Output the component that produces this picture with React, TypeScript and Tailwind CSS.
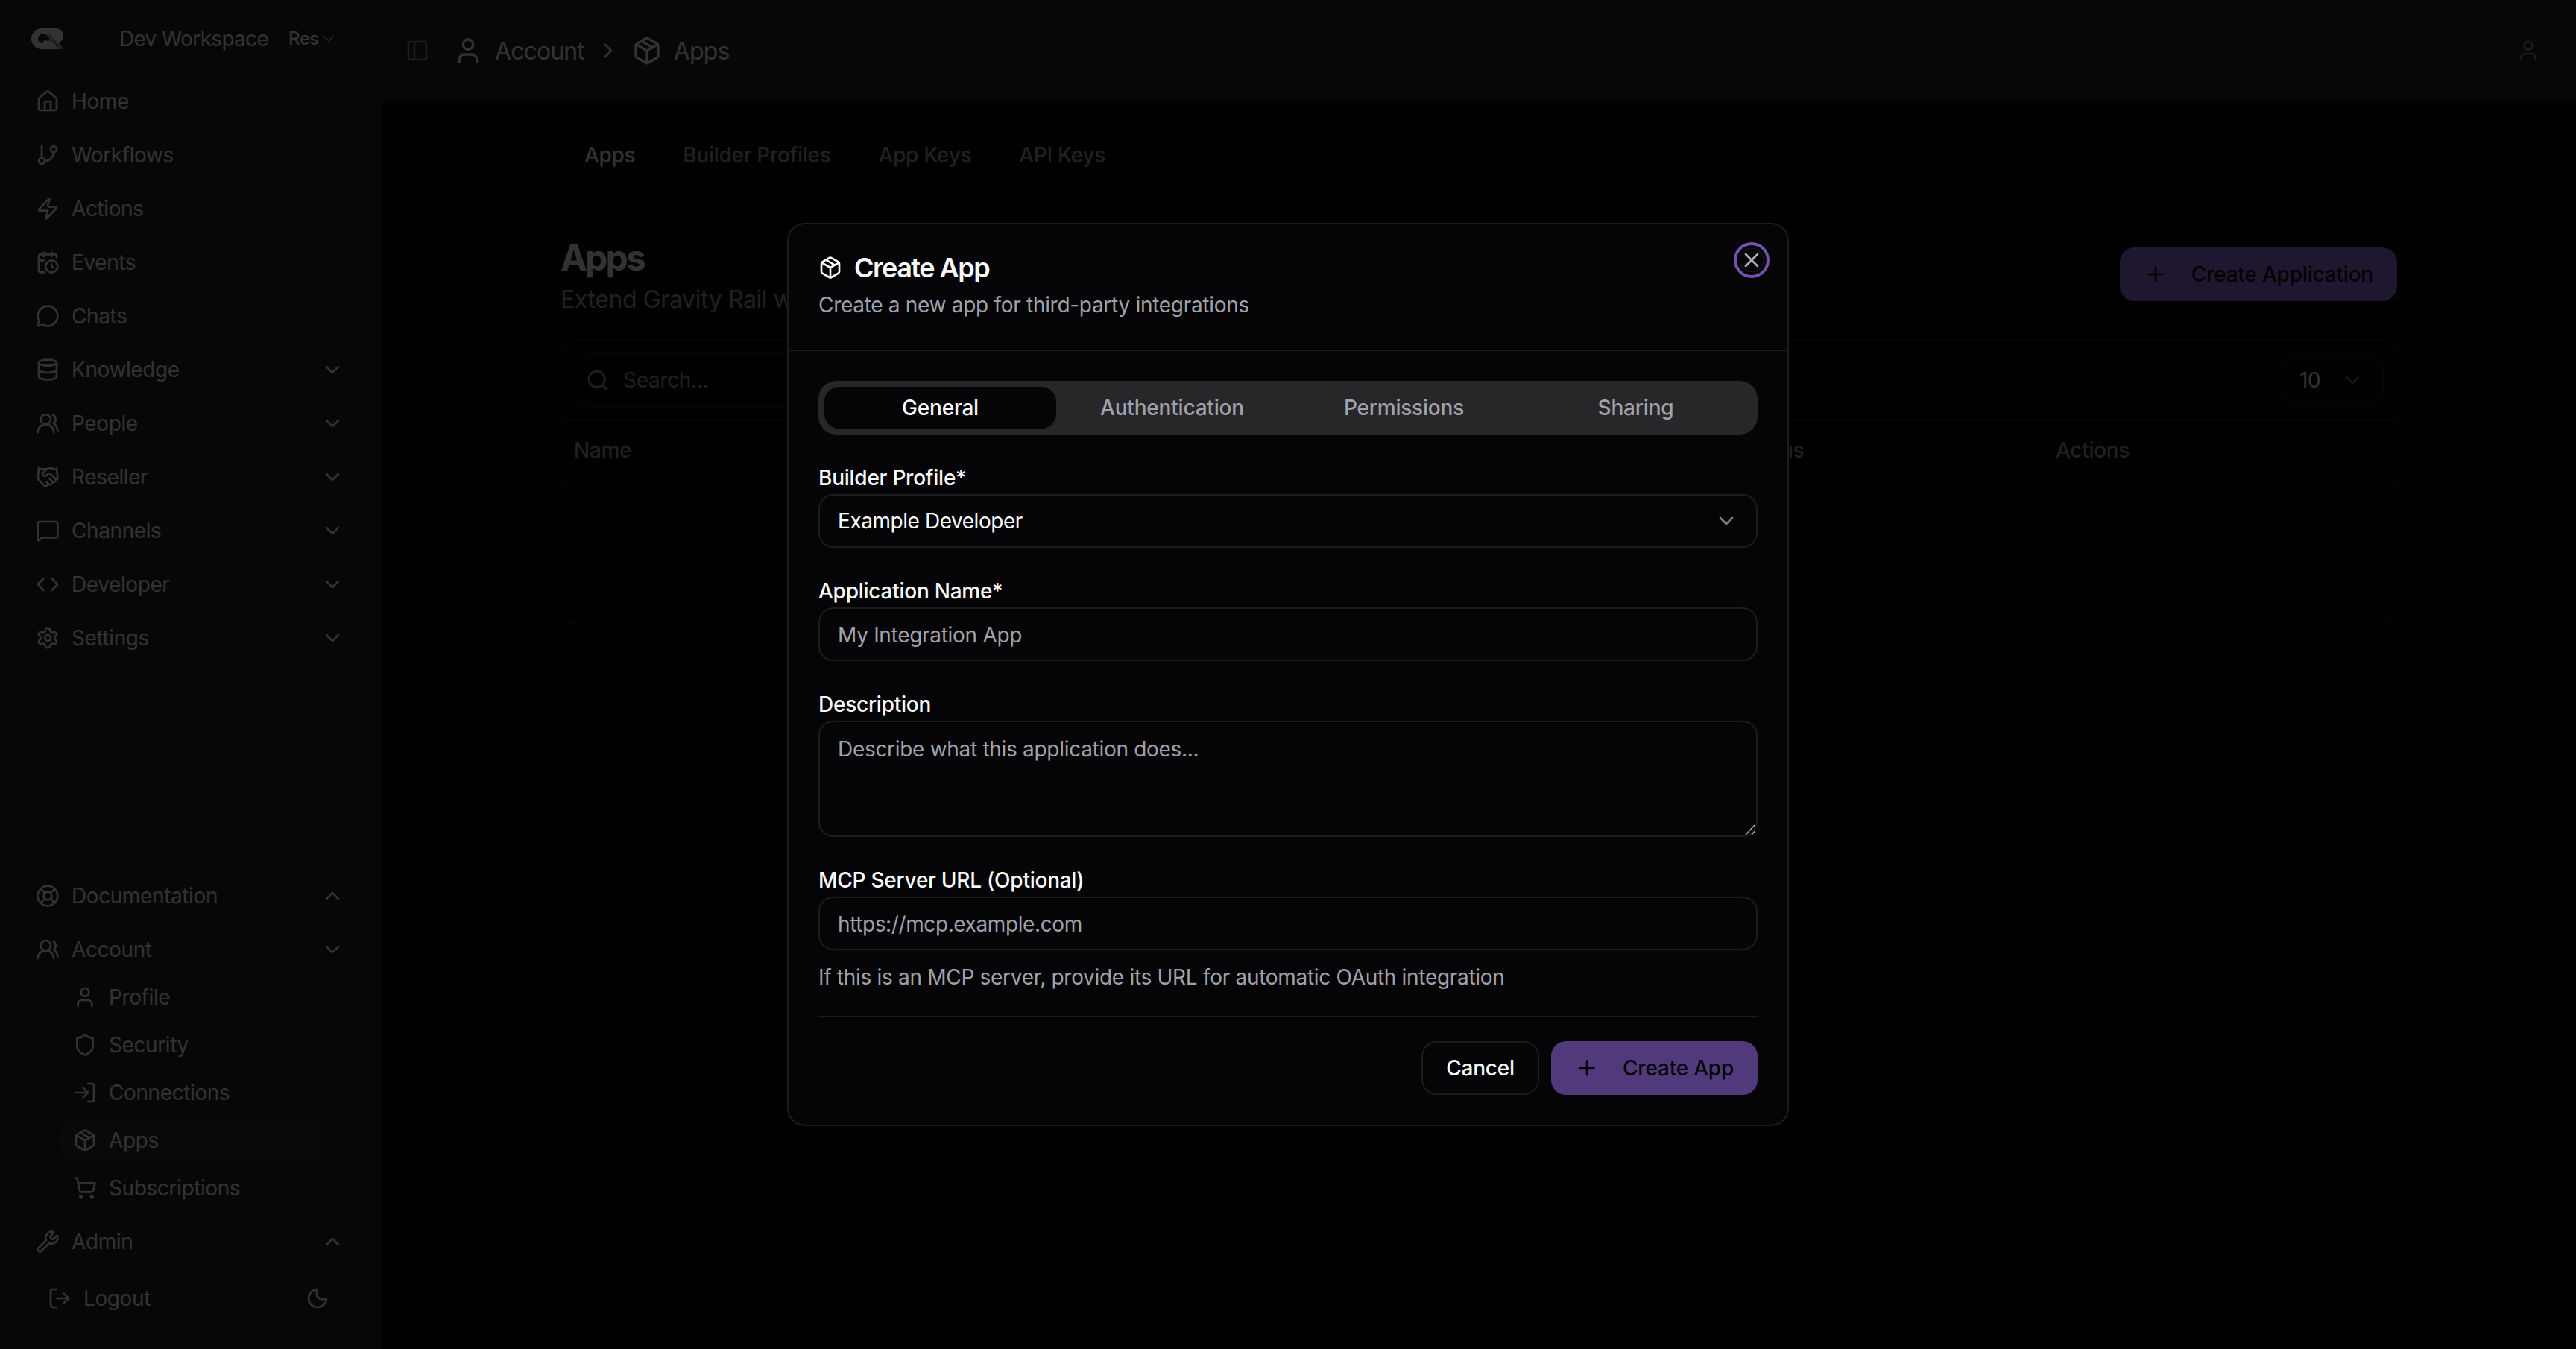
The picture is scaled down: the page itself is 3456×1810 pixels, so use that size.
import type { ReactNode } from "react";
import {
  CalendarClock,
  ChevronDown,
  ChevronRight,
  ChevronUp,
  Code,
  Database,
  GitBranch,
  Handshake,
  House,
  LifeBuoy,
  LogIn,
  LogOut,
  MessageCircle,
  MessageSquare,
  Moon,
  Package,
  PanelLeft,
  Plus,
  Search,
  Settings,
  Shield,
  ShoppingCart,
  User,
  UsersRound,
  Wrench,
  X,
  Zap,
  type LucideIcon,
} from "lucide-react";

type NavItem = {
  label: string;
  icon: LucideIcon;
  chevron?: "up" | "down";
};

const mainNav: NavItem[] = [
  { label: "Home", icon: House },
  { label: "Workflows", icon: GitBranch },
  { label: "Actions", icon: Zap },
  { label: "Events", icon: CalendarClock },
  { label: "Chats", icon: MessageCircle },
  { label: "Knowledge", icon: Database, chevron: "down" },
  { label: "People", icon: UsersRound, chevron: "down" },
  { label: "Reseller", icon: Handshake, chevron: "down" },
  { label: "Channels", icon: MessageSquare, chevron: "down" },
  { label: "Developer", icon: Code, chevron: "down" },
  { label: "Settings", icon: Settings, chevron: "down" },
];

const accountNav: NavItem[] = [
  { label: "Profile", icon: User },
  { label: "Security", icon: Shield },
  { label: "Connections", icon: LogIn },
  { label: "Apps", icon: Package },
  { label: "Subscriptions", icon: ShoppingCart },
];

const pageTabs = ["Apps", "Builder Profiles", "App Keys", "API Keys"];
const dialogTabs = ["General", "Authentication", "Permissions", "Sharing"];

function Logo() {
  return (
    <svg viewBox="0 0 43 28" className="h-7 w-[43px]" fill="none">
      <path
        fill="currentColor"
        fillRule="evenodd"
        d="M14 0H33.5a9.5 9.5 0 0 1 9.5 9.5c0 4.500-2.500 8.300-6 10.300L43 28H14A14 14 0 0 1 14 0ZM15.500 7.500C11.800 7.500 9 10.500 9 14s2.800 6 7.200 6.200V16.500H26.500L18.500 7.500Z"
      />
      <path
        className="stroke-[#27272a]"
        strokeWidth="0.9"
        d="M18.500 7.500 37 28M21 7.500 39.300 28M23.500 7.500 41.600 28"
      />
    </svg>
  );
}

function NavRow({ item }: { item: NavItem }) {
  const Icon = item.icon;
  return (
    <a className="flex h-16 items-center gap-4 px-4">
      <Icon className="size-8" />
      <span className="flex-1">{item.label}</span>
      {item.chevron === "down" && <ChevronDown className="size-8" />}
      {item.chevron === "up" && <ChevronUp className="size-8" />}
    </a>
  );
}

function Sidebar() {
  return (
    <aside className="flex w-[512px] shrink-0 flex-col border-r-2 border-[#1c1c1f] bg-[#27272a] pb-8 pl-8 pr-8 pt-4 tracking-[-0.4px]">
      <div className="flex h-[72px] items-center justify-between pl-2.5">
        <Logo />
        <button className="flex h-[72px] w-[360px] items-center rounded-[20px] border-2 border-[#1c1c1f] pl-10 pr-[26px]">
          <span className="whitespace-nowrap tracking-[-0.7px]">Dev Workspace</span>
          <span className="ml-[17px] flex h-11 w-[52px] shrink-0 items-center overflow-hidden rounded-l-[20px] border-y-2 border-l-2 border-[#1c1c1f] pl-2 text-[24px] font-medium tracking-[-0.5px]">
            Res
          </span>
          <ChevronDown className="size-6 shrink-0 opacity-50" />
        </button>
      </div>

      <nav className="flex flex-col gap-2 pt-4">
        {mainNav.map((item) => (
          <NavRow key={item.label} item={item} />
        ))}
      </nav>

      <div className="mt-auto flex flex-col gap-2">
        <NavRow item={{ label: "Documentation", icon: LifeBuoy, chevron: "up" }} />
        <div>
          <NavRow item={{ label: "Account", icon: UsersRound, chevron: "down" }} />
          <ul className="ml-[30px] flex w-[368px] flex-col gap-2 border-l-2 border-[#1c1c1f] py-1 pl-[18px]">
            {accountNav.map(({ label, icon: Icon }) => (
              <li
                key={label}
                className={`flex h-14 items-center gap-4 rounded-[20px] px-4 ${
                  label === "Apps" ? "bg-[#313134]" : ""
                }`}
              >
                <Icon className="size-8" />
                {label}
              </li>
            ))}
          </ul>
        </div>
        <NavRow item={{ label: "Admin", icon: Wrench, chevron: "up" }} />
      </div>

      <div className="flex h-20 items-end justify-between pl-8 pr-4">
        <button className="flex h-[72px] items-center gap-4">
          <LogOut className="size-8" />
          Logout
        </button>
        <button className="grid size-[72px] place-items-center rounded-[20px] border-2 border-[#1c1c1f]">
          <Moon className="size-8" />
        </button>
      </div>
    </aside>
  );
}

function Header() {
  return (
    <header className="flex h-[138px] items-center border-b-2 border-[#1c1c1f] bg-[#27272a] pl-8 pr-12">
      <PanelLeft className="size-8 text-[#8c8c92]" />
      <div className="ml-8 flex items-center gap-4 text-[32px] tracking-[-0.9px]">
        <User className="size-10" />
        <span className="pt-px">Account</span>
        <ChevronRight className="size-8" />
        <Package className="size-10" />
        <span className="pt-px">Apps</span>
      </div>
      <User className="ml-auto size-8 text-[#8c8c92]" />
    </header>
  );
}

function AppsPage() {
  return (
    <main className="mx-auto w-[2464px] pt-[34px]">
      <nav className="flex h-[72px] items-center font-medium tracking-[-0.3px]">
        {pageTabs.map((tab) => (
          <a
            key={tab}
            className={`px-8 ${tab === "Apps" ? "text-[#fafafa]" : "text-[#a1a1aa]"}`}
          >
            {tab}
          </a>
        ))}
      </nav>

      <div className="mt-16 flex items-center justify-between pt-0.5">
        <div className="pt-1">
          <h1 className="text-[48px] font-bold leading-[64px] tracking-[-2.8px]">Apps</h1>
          <p className="text-[32px] leading-[48px] tracking-[-0.4px] text-[#a1a1aa]">
            Extend Gravity Rail with
          </p>
        </div>
        <button className="flex h-[72px] items-center rounded-[20px] bg-[#9a74ec] px-8 font-medium tracking-[-0.2px] text-[#050507]">
          <Plus className="mr-8 size-8" />
          Create Application
        </button>
      </div>

      <section className="mt-[30px] h-[382px] rounded-[20px] border-2 border-[#1c1c1f]">
        <div className="flex h-[106px] items-center justify-between border-b-2 border-[#1c1c1f] px-4 text-[#a1a1aa]">
          <div className="flex h-[72px] w-[700px] items-center rounded-[20px] border-2 border-[#1c1c1f] pl-3.5">
            <Search className="size-8" />
            <span className="ml-[18px] tracking-[-0.3px]">Search...</span>
          </div>
          <div className="flex h-16 w-[140px] items-center justify-between rounded-[20px] border-2 border-[#1c1c1f] pl-[25px] pr-6">
            <span className="text-[#fafafa]">10</span>
            <ChevronDown className="size-8 opacity-70" />
          </div>
        </div>
        <div className="flex h-[82px] items-center border-b-2 border-[#1c1c1f] font-medium tracking-[-0.3px] text-[#a1a1aa]">
          <span className="w-[1567px] px-4">Name</span>
          <span className="w-[421px] px-4">Status</span>
          <span className="px-4">Actions</span>
        </div>
      </section>
    </main>
  );
}

function Field({ label, children }: { label: string; children: ReactNode }) {
  return (
    <div className="mt-11 flex flex-col gap-2">
      <label className="font-medium leading-[28px] tracking-[-0.25px]">{label}</label>
      {children}
    </div>
  );
}

function CreateAppDialog() {
  return (
    <div
      role="dialog"
      className="relative w-[1344px] rounded-[24px] border-2 border-[#1c1c1f] bg-[#050507] text-[#fafafa]"
    >
      <div className="flex h-[170px] flex-col gap-3 border-b-2 border-[#1c1c1f] p-10">
        <h2 className="flex items-center gap-4 text-[36px] font-semibold leading-[36px] tracking-[-1.5px]">
          <Package className="size-8" />
          Create App
        </h2>
        <p className="leading-[40px] text-[#a1a1aa]">
          Create a new app for third-party integrations
        </p>
      </div>

      <button
        aria-label="Close"
        className="absolute right-8 top-8 grid size-8 place-items-center rounded-full text-[#b2b2b4] outline-1 outline-dashed -outline-offset-1 outline-[#1f1930] ring-4 ring-[#7252b0] ring-offset-4 ring-offset-[#050507]"
      >
        <X className="size-8" />
      </button>

      <div className="p-10">
        <div className="grid h-[72px] grid-cols-4 rounded-[24px] bg-[#27272a] p-2 font-medium tracking-[-0.2px] text-[#a1a1aa]">
          {dialogTabs.map((tab) => (
            <button
              key={tab}
              className={`rounded-[20px] ${
                tab === "General" ? "bg-[#050507] text-[#fafafa] shadow-sm" : ""
              }`}
            >
              {tab}
            </button>
          ))}
        </div>

        <Field label="Builder Profile*">
          <div className="flex h-[72px] items-center justify-between rounded-[20px] border-2 border-[#1c1c1f] px-6">
            <span className="tracking-[-0.45px]">Example Developer</span>
            <ChevronDown className="size-8 opacity-50" />
          </div>
        </Field>
        <Field label="Application Name*">
          <input
            placeholder="My Integration App"
            className="h-[72px] rounded-[20px] border-2 border-[#1c1c1f] px-6 pt-px placeholder:text-[#a1a1aa]"
          />
        </Field>
        <Field label="Description">
          <div className="relative h-[156px] rounded-[20px] border-2 border-[#1c1c1f] px-6 py-4 leading-[40px] text-[#a1a1aa]">
            Describe what this application does...
            <svg viewBox="0 0 16 16" className="absolute bottom-0 right-0 size-4" stroke="#a8a8a8" strokeWidth="1.6">
              <path d="M2 15 14 2M10 15l4-4.500" />
            </svg>
          </div>
        </Field>
        <Field label="MCP Server URL (Optional)">
          <input
            placeholder="https://mcp.example.com"
            className="h-[72px] rounded-[20px] border-2 border-[#1c1c1f] px-6 pt-px tracking-[-0.4px] placeholder:text-[#a1a1aa]"
          />
        </Field>
        <p className="mt-4 leading-[40px] text-[#a1a1aa]">
          If this is an MCP server, provide its URL for automatic OAuth integration
        </p>

        <div className="mt-8 flex justify-end gap-4 border-t-2 border-[#1c1c1f] pt-8 font-medium tracking-[-0.2px]">
          <button className="h-[72px] w-[158px] rounded-[20px] border-2 border-[#1c1c1f]">
            Cancel
          </button>
          <button className="flex h-[72px] w-[277px] items-center rounded-[20px] bg-[#503a7c] pl-8 text-[#050507]">
            <Plus className="mr-8 size-8" />
            Create App
          </button>
        </div>
      </div>
    </div>
  );
}

export default function App() {
  return (
    <div className="flex h-[1810px] w-[3456px] overflow-hidden bg-[#050507] font-['Inter',sans-serif] text-[28px] leading-[40px] tracking-[-0.3px] text-[#fafafa]">
      <Sidebar />
      <div className="flex-1">
        <Header />
        <AppsPage />
      </div>

      {/* Modal */}
      <div className="fixed inset-0 grid place-items-center bg-black/80">
        <CreateAppDialog />
      </div>
    </div>
  );
}
